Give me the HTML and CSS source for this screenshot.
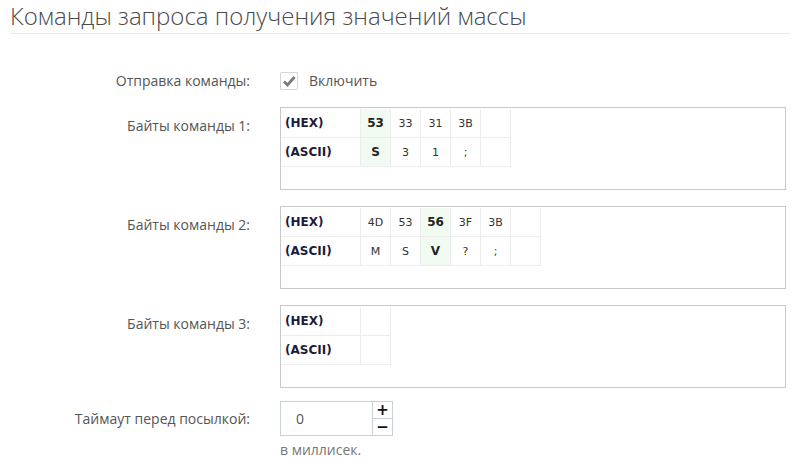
FILE: index.html
```html
<!DOCTYPE html>
<html lang="ru">
<head>
    <meta charset="UTF-8">
    <title>Команды запроса получения значений массы</title>
    <link rel="stylesheet" href="styles.css">
</head>
<body>
    <div class="page">
        <h1 class="title">Команды запроса получения значений массы</h1>

        <div class="form">
            <div class="row row-check">
                <div class="label">Отправка команды:</div>
                <label class="check">
                    <span class="check-box">
                        <svg width="14" height="14" viewBox="0 0 14 14"><path d="M2 7.5 L5.5 11 L12.5 3" fill="none" stroke="#7a7a7a" stroke-width="2.8"/></svg>
                    </span>
                    Включить
                </label>
            </div>

            <!-- Команда 1 -->
            <div class="row">
                <div class="label label-box">Байты команды 1:</div>
                <div class="bytes">
                    <table>
                        <tr>
                            <th>(HEX)</th>
                            <td class="hl">53</td><td>33</td><td>31</td><td>3B</td><td></td>
                        </tr>
                        <tr>
                            <th>(ASCII)</th>
                            <td class="hl">S</td><td>3</td><td>1</td><td>;</td><td></td>
                        </tr>
                    </table>
                </div>
            </div>

            <!-- Команда 2 -->
            <div class="row">
                <div class="label label-box">Байты команды 2:</div>
                <div class="bytes">
                    <table>
                        <tr>
                            <th>(HEX)</th>
                            <td>4D</td><td>53</td><td class="hl">56</td><td>3F</td><td>3B</td><td></td>
                        </tr>
                        <tr>
                            <th>(ASCII)</th>
                            <td>M</td><td>S</td><td class="hl">V</td><td>?</td><td>;</td><td></td>
                        </tr>
                    </table>
                </div>
            </div>

            <!-- Команда 3 -->
            <div class="row">
                <div class="label label-box">Байты команды 3:</div>
                <div class="bytes">
                    <table>
                        <tr><th>(HEX)</th><td></td></tr>
                        <tr><th>(ASCII)</th><td></td></tr>
                    </table>
                </div>
            </div>

            <div class="row row-timeout">
                <div class="label">Таймаут перед посылкой:</div>
                <div>
                    <div class="spinner">
                        <input type="text" value="0">
                        <div class="spin-buttons">
                            <span>+</span>
                            <span>&minus;</span>
                        </div>
                    </div>
                    <div class="hint">в миллисек.</div>
                </div>
            </div>
        </div>
    </div>
</body>
</html>
```

FILE: styles.css
```css
body {
    margin: 0;
    padding: 0;
    font-family: "Open Sans", Arial, sans-serif;
    font-size: 14px;
    color: #555;
    background-color: #fff;
}
.page {
    padding: 0 15px 0 10px;
}
.title {
    font-size: 24px;
    font-weight: 300;
    color: #4a4a4a;
    margin: 0;
    padding: 0 0 1px 0;
    line-height: 32px;
    border-bottom: 1px solid #e8e8e8;
}
.form {
    padding-top: 37px;
}
.row {
    display: flex;
    margin-bottom: 16px;
}
.label {
    width: 240px;
    margin-right: 30px;
    text-align: right;
    line-height: 20px;
}
.label-box {
    padding-top: 9px;
}
.row-check {
    align-items: center;
    margin-bottom: 16px;
}
.check {
    display: flex;
    align-items: center;
    line-height: 20px;
}
.check-box {
    width: 16px;
    height: 16px;
    border: 1px solid #d6d6d6;
    border-radius: 1px;
    margin-right: 11px;
    display: flex;
    align-items: center;
    justify-content: center;
}
.bytes {
    width: 504px;
    height: 81px;
    border: 1px solid #c8c8c8;
}
.bytes table {
    border-collapse: collapse;
    font-family: "DejaVu Sans", Verdana, sans-serif;
    font-size: 12px;
    color: #333;
    margin-top: 1px;
}
.bytes th,
.bytes td {
    height: 28px;
    border: 1px solid #ececec;
    padding: 0;
}
.bytes tr:first-child th,
.bytes tr:first-child td {
    border-top: none;
}
.bytes th {
    width: 75px;
    text-align: left;
    padding-left: 4px;
    color: #1c1c3a;
    border-left: none;
}
.bytes td {
    width: 29px;
    text-align: center;
    font-size: 11px;
}
.bytes td.hl {
    background-color: #f1fbf1;
    font-weight: bold;
    font-size: 12px;
    color: #222;
}
.row-timeout {
    align-items: flex-start;
    margin-top: -3px;
}
.row-timeout .label {
    padding-top: 8px;
}
.spinner {
    display: flex;
    width: 111px;
    height: 33px;
    border: 1px solid #c9d0da;
}
.spinner input {
    width: 76px;
    border: none;
    padding: 0 0 0 15px;
    font-family: "Open Sans", Arial, sans-serif;
    font-size: 14px;
    color: #555;
    outline: none;
}
.spin-buttons {
    width: 20px;
    border-left: 1px solid #c9d0da;
    display: flex;
    flex-direction: column;
}
.spin-buttons span {
    flex: 1;
    text-align: center;
    font-family: "DejaVu Sans", Arial, sans-serif;
    font-weight: bold;
    font-size: 15px;
    line-height: 16px;
    color: #111;
}
.spin-buttons span + span {
    border-top: 1px solid #c9d0da;
}
.hint {
    margin-top: 4px;
    color: #777;
    line-height: 20px;
}
```
